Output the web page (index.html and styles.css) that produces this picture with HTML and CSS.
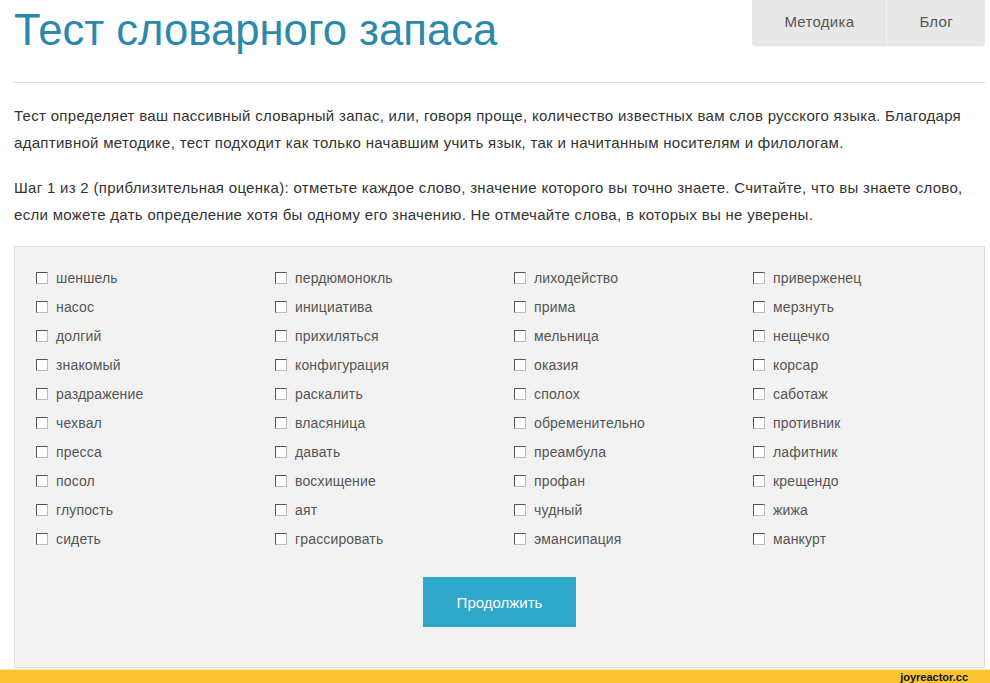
FILE: index.html
```html
<!DOCTYPE html>
<html lang="ru">
<head>
  <meta charset="UTF-8">
  <title>Тест словарного запаса</title>
  <link rel="stylesheet" href="styles.css">
</head>
<body>
  <div class="page">
    <div class="header">
      <h1>Тест словарного запаса</h1>
      <nav class="nav">
        <a href="#">Методика</a>
        <a href="#">Блог</a>
      </nav>
    </div>
    <hr>

    <p>Тест определяет ваш пассивный словарный запас, или, говоря проще, количество известных вам слов русского языка. Благодаря адаптивной методике, тест подходит как только начавшим учить язык, так и начитанным носителям и филологам.</p>
    <p>Шаг 1 из 2 (приблизительная оценка): отметьте каждое слово, значение которого вы точно знаете. Считайте, что вы знаете слово, если можете дать определение хотя бы одному его значению. Не отмечайте слова, в которых вы не уверены.</p>

    <form class="words">
      <div class="grid">
        <label><span class="box"></span>шеншель</label>
        <label><span class="box"></span>пердюмонокль</label>
        <label><span class="box"></span>лиходейство</label>
        <label><span class="box"></span>приверженец</label>

        <label><span class="box"></span>насос</label>
        <label><span class="box"></span>инициатива</label>
        <label><span class="box"></span>прима</label>
        <label><span class="box"></span>мерзнуть</label>

        <label><span class="box"></span>долгий</label>
        <label><span class="box"></span>прихиляться</label>
        <label><span class="box"></span>мельница</label>
        <label><span class="box"></span>нещечко</label>

        <label><span class="box"></span>знакомый</label>
        <label><span class="box"></span>конфигурация</label>
        <label><span class="box"></span>оказия</label>
        <label><span class="box"></span>корсар</label>

        <label><span class="box"></span>раздражение</label>
        <label><span class="box"></span>раскалить</label>
        <label><span class="box"></span>сполох</label>
        <label><span class="box"></span>саботаж</label>

        <label><span class="box"></span>чехвал</label>
        <label><span class="box"></span>власяница</label>
        <label><span class="box"></span>обременительно</label>
        <label><span class="box"></span>противник</label>

        <label><span class="box"></span>пресса</label>
        <label><span class="box"></span>давать</label>
        <label><span class="box"></span>преамбула</label>
        <label><span class="box"></span>лафитник</label>

        <label><span class="box"></span>посол</label>
        <label><span class="box"></span>восхищение</label>
        <label><span class="box"></span>профан</label>
        <label><span class="box"></span>крещендо</label>

        <label><span class="box"></span>глупость</label>
        <label><span class="box"></span>аят</label>
        <label><span class="box"></span>чудный</label>
        <label><span class="box"></span>жижа</label>

        <label><span class="box"></span>сидеть</label>
        <label><span class="box"></span>грассировать</label>
        <label><span class="box"></span>эмансипация</label>
        <label><span class="box"></span>манкурт</label>
      </div>
      <button type="button">Продолжить</button>
    </form>
  </div>
  <div class="watermark">joyreactor.cc</div>
</body>
</html>
```

FILE: styles.css
```css
body {
  margin: 0;
  font-family: "Liberation Sans", Arial, sans-serif;
  color: #333;
  background: #fff;
}
.page {
  padding: 0 5px 0 14px;
}
.header {
  display: flex;
  justify-content: space-between;
  align-items: flex-start;
}
h1 {
  margin: 0;
  font-size: 43.6px;
  line-height: 60px;
  font-weight: normal;
  color: #2b8aab;
}
.nav {
  display: flex;
  background: #e8e8e8;
  border-radius: 0 0 4px 4px;
  box-shadow: 0 1px 1px rgba(0,0,0,0.04);
}
.nav a {
  height: 46px;
  line-height: 44px;
  padding: 0 32px;
  font-size: 15px;
  letter-spacing: 0.3px;
  color: #555;
  text-decoration: none;
}
.nav a + a {
  border-left: 1px solid #f4f4f4;
}
hr {
  margin: 22px 0 19px;
  border: none;
  border-top: 1px solid #ddd;
}
p {
  margin: 0 0 18px;
  font-size: 15px;
  line-height: 27px;
  letter-spacing: 0.3px;
}
.words {
  background: #f2f2f2;
  border: 1px solid #ddd;
  margin-top: 18px;
  padding: 16px 0 40px 21px;
  display: flex;
  flex-direction: column;
  align-items: center;
}
.grid {
  align-self: stretch;
  display: grid;
  grid-template-columns: repeat(4, 239px);
}
.grid label {
  display: flex;
  align-items: center;
  height: 29px;
  font-size: 14px;
  letter-spacing: 0.15px;
  color: #555;
}
.box {
  width: 10px;
  height: 10px;
  margin-right: 8px;
  background: #fff;
  border: 1px solid;
  border-color: #555 #bbb #bbb #555;
}
button {
  margin: 24px 21px 0 0;
  width: 153px;
  height: 50px;
  border: none;
  background: #2ea7c9;
  color: #fff;
  font-family: inherit;
  font-size: 15px;
  cursor: pointer;
}
.watermark {
  margin-top: 1px;
  height: 15px;
  background: #fac431;
  border-top: 1px solid #fde9a8;
  text-align: right;
  padding-right: 22px;
  font-size: 11px;
  line-height: 15px;
  font-weight: bold;
  color: #111;
}
```
